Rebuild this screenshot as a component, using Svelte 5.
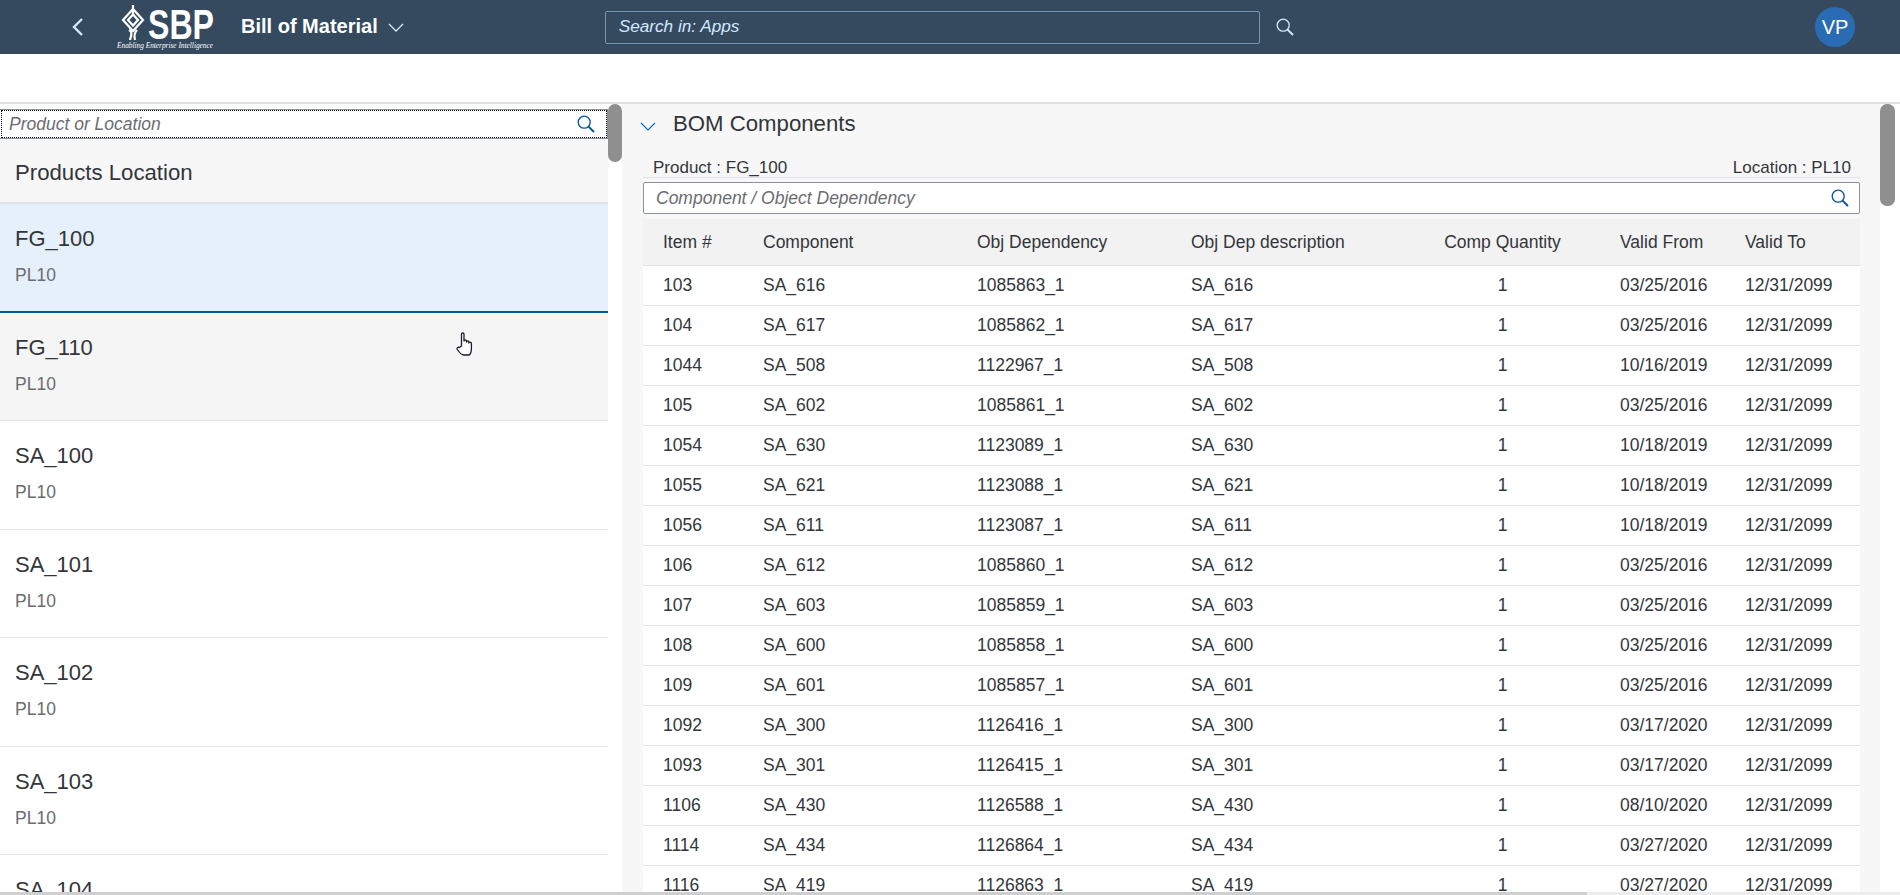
<script>
  const products = ['FG_100', 'FG_110', 'SA_100', 'SA_101', 'SA_102', 'SA_103', 'SA_104'];
  const rows = [
    ['103', 'SA_616', '1085863_1', '03/25/2016'],
    ['104', 'SA_617', '1085862_1', '03/25/2016'],
    ['1044', 'SA_508', '1122967_1', '10/16/2019'],
    ['105', 'SA_602', '1085861_1', '03/25/2016'],
    ['1054', 'SA_630', '1123089_1', '10/18/2019'],
    ['1055', 'SA_621', '1123088_1', '10/18/2019'],
    ['1056', 'SA_611', '1123087_1', '10/18/2019'],
    ['106', 'SA_612', '1085860_1', '03/25/2016'],
    ['107', 'SA_603', '1085859_1', '03/25/2016'],
    ['108', 'SA_600', '1085858_1', '03/25/2016'],
    ['109', 'SA_601', '1085857_1', '03/25/2016'],
    ['1092', 'SA_300', '1126416_1', '03/17/2020'],
    ['1093', 'SA_301', '1126415_1', '03/17/2020'],
    ['1106', 'SA_430', '1126588_1', '08/10/2020'],
    ['1114', 'SA_434', '1126864_1', '03/27/2020'],
    ['1116', 'SA_419', '1126863_1', '03/27/2020']
  ];
</script>

{#snippet lens(cls)}
  <svg class={cls} viewBox="0 0 18 18" fill="none" stroke="currentColor">
    <circle cx="7.2" cy="7.2" r="6" stroke-width="1.3" />
    <path d="M11.6 11.6 L17 17" stroke-width="2" />
  </svg>
{/snippet}

<div class="page">
  <header class="shell">
    <svg class="back" viewBox="0 0 13 20" fill="none" stroke="#d1e8ff" stroke-width="2.4"><path d="M11 2 L3 10 L11 18" /></svg>
    <svg class="logo" viewBox="0 0 100 46" fill="#fff">
      <g fill="none" stroke="#fff" stroke-width="2.2">
        <path d="M18 5 L8 16 L18 27 L28 16 Z" />
        <path d="M18 10.5 L13 16 L18 21.5 L23 16 Z" />
        <path d="M18 1 L18 10 M14 26 C18 28 16 32 15 36 M22 26 C19 29 19 32 20 36" />
      </g>
      <text x="33" y="35" class="sbp" textLength="66" lengthAdjust="spacingAndGlyphs">SBP</text>
      <text x="2" y="43.5" class="tag" textLength="96" lengthAdjust="spacingAndGlyphs">Enabling Enterprise Intelligence</text>
    </svg>
    <span class="app-title">Bill of Material</span>
    <svg class="title-caret" viewBox="0 0 16 9" fill="none" stroke="#d1e8ff" stroke-width="1.3"><path d="M1 1 L8 8 L15 1" /></svg>
    <div class="shell-search">Search in: Apps</div>
    {@render lens('shell-lens')}
    <div class="avatar">VP</div>
  </header>

  <div class="band"></div>

  <main class="split">
    <section class="master">
      <div class="master-col">
        <div class="search focus">
          <span>Product or Location</span>
          {@render lens('lens')}
        </div>
        <div class="list-head">Products Location</div>
        {#each products as p, i (p)}
          <div class="item" class:selected={i === 0} class:hover={i === 1}>
            <div class="item-title">{p}</div>
            <div class="item-sub">PL10</div>
          </div>
        {/each}
      </div>
      <div class="scroll"><div class="thumb short"></div></div>
    </section>

    <section class="detail">
      <div class="detail-col">
        <div class="panel-head">
          <svg class="panel-caret" viewBox="0 0 16 9" fill="none" stroke="#0a6ed1" stroke-width="1.2"><path d="M1 1 L8 8 L15 1" /></svg>
          <span>BOM Components</span>
        </div>
        <div class="meta">
          <span>Product : FG_100</span>
          <span>Location : PL10</span>
        </div>
        <div class="search comp">
          <span>Component / Object Dependency</span>
          {@render lens('lens')}
        </div>
        <table>
          <colgroup>
            <col style="width:100px" /><col style="width:214px" /><col style="width:214px" />
            <col style="width:234px" /><col style="width:195px" /><col style="width:125px" /><col />
          </colgroup>
          <thead>
            <tr>
              <th>Item #</th><th>Component</th><th>Obj Dependency</th><th>Obj Dep description</th>
              <th class="mid">Comp Quantity</th><th>Valid From</th><th>Valid To</th>
            </tr>
          </thead>
          <tbody>
            {#each rows as r (r[0])}
              <tr>
                <td>{r[0]}</td><td>{r[1]}</td><td>{r[2]}</td><td>{r[1]}</td>
                <td class="mid">1</td><td>{r[3]}</td><td>12/31/2099</td>
              </tr>
            {/each}
          </tbody>
        </table>
      </div>
      <div class="scroll"><div class="thumb tall"></div></div>
    </section>
  </main>

  <svg class="hand" viewBox="0 0 18 24" fill="#fff" stroke="#1d1d2b" stroke-width="1.3" stroke-linejoin="round">
    <path d="M5.5 14 V2.2 C5.5 0.6 8 0.6 8 2.2 V9 C8 7.4 10.4 7.4 10.4 9 V10 C10.4 8.6 12.8 8.6 12.8 10 V11 C12.8 9.8 15.4 9.8 15.4 11.4 V17 C15.4 20 14 23 13 23 H8 C6 23 3 20 1.4 17.5 C0.4 16 2 14.6 3.4 15.6 Z" />
  </svg>
  <div class="hbar"><div class="hbar-thumb"></div></div>
</div>

<style>
  :global(body) { margin: 0; background: #fff; }
  .page {
    position: relative; height: 895px; overflow: hidden; display: flex; flex-direction: column;
    font-family: "Liberation Sans", Arial, sans-serif; font-size: 17.5px; color: #32363a;
  }

  .shell { flex: none; height: 54px; background: #354a5f; display: flex; align-items: center; color: #fff; }
  .back { width: 13px; height: 20px; margin-left: 71px; flex: none; }
  .logo { width: 100px; height: 46px; margin-left: 31px; flex: none; }
  .sbp { font-size: 43px; font-weight: 700; }
  .tag { font-family: "Liberation Serif", serif; font-style: italic; font-size: 7.5px; }
  .app-title { margin: 0 0 2px 26px; font-size: 20px; font-weight: 700; white-space: nowrap; }
  .title-caret { width: 16px; height: 9px; margin-left: 10px; flex: none; }
  .shell-search {
    box-sizing: border-box; width: 655px; height: 33px; margin-left: 201px; padding-left: 13px;
    border: 1px solid #7996b4; border-radius: 2px; line-height: 29px;
    font-style: italic; color: #d1e8ff; font-size: 17.2px;
  }
  .shell-lens { width: 18px; height: 18px; margin-left: 16px; color: #d1e8ff; flex: none; }
  .avatar {
    width: 40px; height: 40px; margin-left: auto; margin-right: 45px; border-radius: 50%;
    background: #2a6cb4; text-align: center; line-height: 40px; font-size: 20px;
  }

  .band { flex: none; box-sizing: border-box; height: 50px; border-bottom: 2px solid #e0e0e0; }

  .split { flex: 1; min-height: 0; display: flex; overflow: hidden; }
  .master { flex: none; width: 622px; display: flex; }
  .master-col { width: 608px; }
  .detail { flex: 1; display: flex; background: #f7f7f7; }
  .detail-col { width: 1258px; }
  .scroll { flex: none; background: #fff; }
  .master .scroll { width: 14px; }
  .detail .scroll { width: 20px; }
  .thumb { background: #8f8f8f; border-radius: 7px; }
  .thumb.short { height: 58px; }
  .thumb.tall { width: 15px; height: 102px; }

  .search {
    box-sizing: border-box; display: flex; align-items: center; justify-content: space-between;
    background: #fff; font-style: italic; color: #6a6d70; font-size: 17.5px;
  }
  .search.focus {
    height: 30px; margin: 5px 0 0 0; padding: 0 12px 0 9px;
    outline: 1px dotted #000; outline-offset: -2px; border: 1px solid #89919a; border-left: none;
  }
  .search.comp {
    height: 32px; margin: 4px 20px 0 21px; padding: 0 10px 0 12px; border: 1px solid #89919a; border-radius: 2px;
  }
  .lens { width: 18px; height: 18px; color: #0854a0; flex: none; }

  .list-head {
    box-sizing: border-box; height: 65px; padding-left: 15px; line-height: 68px;
    background: #f7f7f7; border-bottom: 2px solid #e0e0e0; font-size: 22.2px;
  }
  .item { box-sizing: border-box; height: 108.5px; padding: 21px 15px 0; background: #fff; border-bottom: 1px solid #e5e5e5; }
  .item.selected { background: #e5f0fa; border-bottom: 2px solid #0854a0; }
  .item.hover { background: #f5f5f5; }
  .item-title { font-size: 22px; line-height: 28px; }
  .item-sub { margin-top: 11px; font-size: 17.5px; line-height: 22px; color: #6a6d70; }

  .panel-head { display: flex; align-items: center; height: 40px; font-size: 22.2px; padding-left: 18px; }
  .panel-caret { width: 16px; height: 9px; margin-right: 17px; margin-top: 4px; }
  .meta {
    display: flex; justify-content: space-between; height: 34px; box-sizing: border-box; margin: 0 20px 0 21px;
    padding: 14px 9px 0 10px; line-height: 20px; border-bottom: 1px solid #e0e0e0; font-size: 17px;
  }

  table {
    width: 1217px; margin: 5px 0 0 21px; border-collapse: collapse; table-layout: fixed; background: #fff;
  }
  th, td { text-align: left; padding: 0 0 0 20px; white-space: nowrap; font-weight: 400; }
  th { height: 46px; background: #f2f2f2; border-bottom: 1px solid #e4e4e4; }
  td { height: 39px; border-bottom: 1px solid #e4e4e4; }
  th.mid, td.mid { text-align: center; padding-left: 0; }

  .hand { position: absolute; left: 456px; top: 332px; width: 18px; height: 24px; }
  .hbar { position: absolute; left: 0; right: 0; bottom: 0; height: 3px; background: #ececec; }
  .hbar-thumb { width: 1587px; height: 3px; background: #cfcfcf; }
</style>
